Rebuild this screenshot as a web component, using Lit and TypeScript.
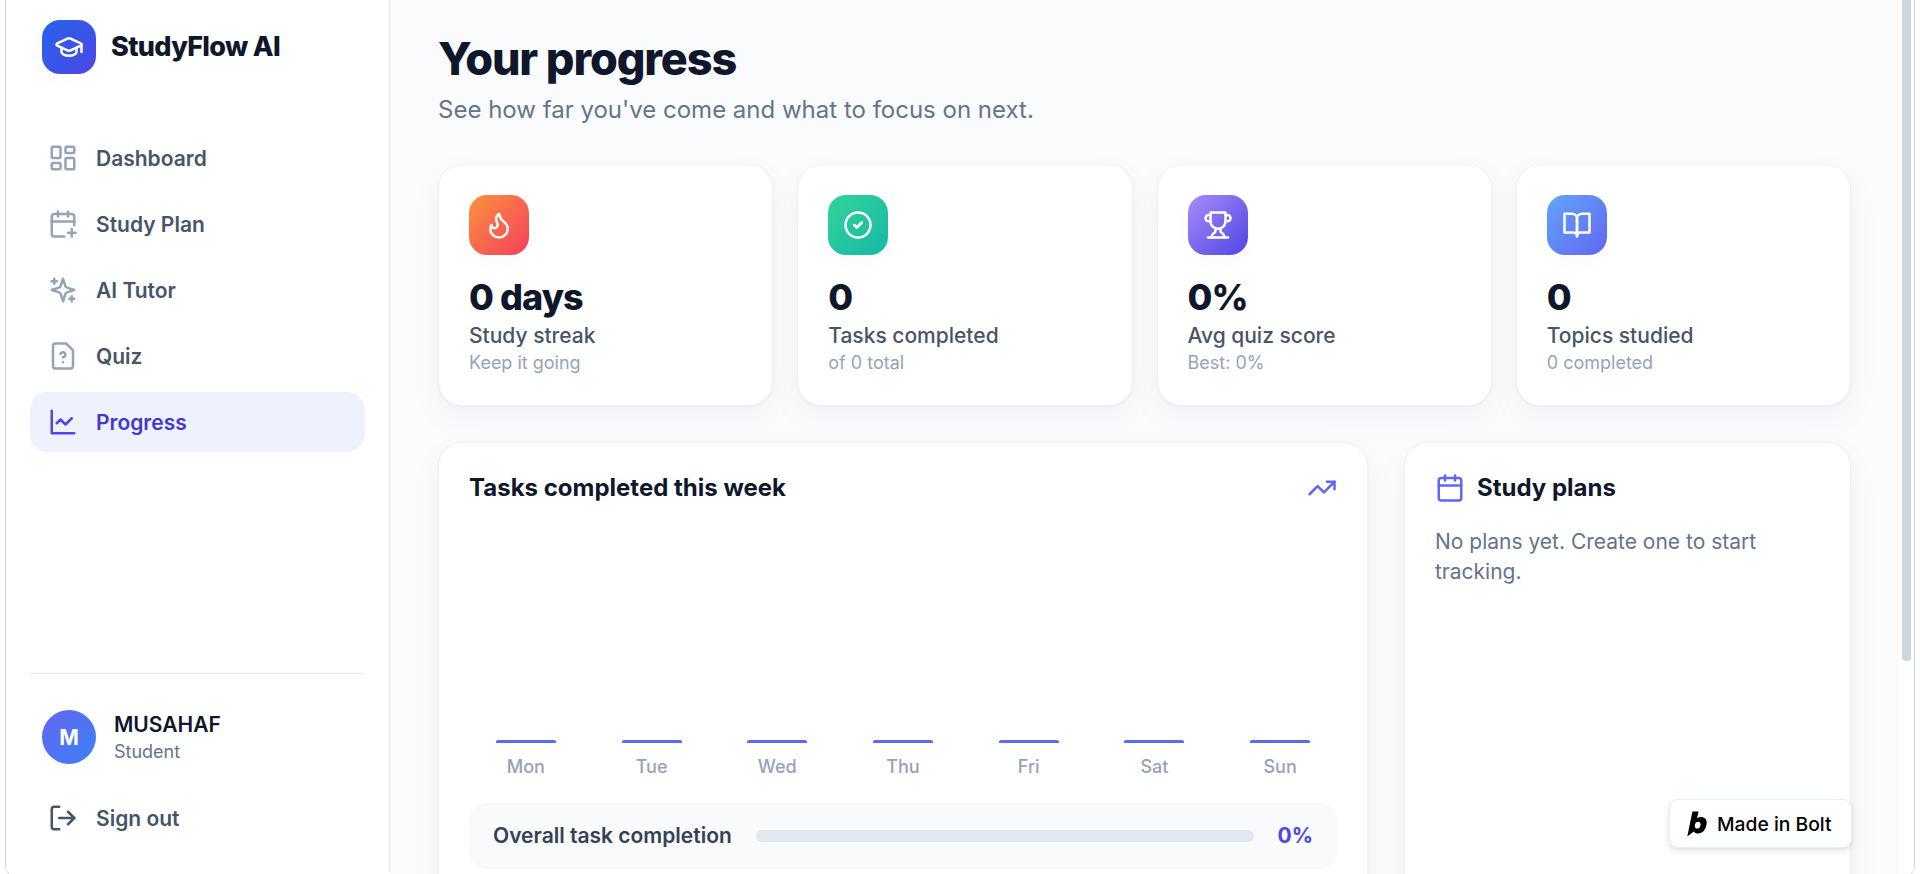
import { LitElement, html, svg, css, type TemplateResult } from 'lit';
import { customElement, property } from 'lit/decorators.js';

type StatTone = 'streak' | 'tasks' | 'score' | 'topics';

interface NavItem {
  label: string;
  icon: string;
  active?: boolean;
}

interface Stat {
  icon: string;
  tone: StatTone;
  value: string;
  label: string;
  hint: string;
}

interface DayCount {
  day: string;
  count: number;
}

const NAV_ITEMS: NavItem[] = [
  { label: 'Dashboard', icon: 'dashboard' },
  { label: 'Study Plan', icon: 'calendar-plus' },
  { label: 'AI Tutor', icon: 'sparkles' },
  { label: 'Quiz', icon: 'file-question' },
  { label: 'Progress', icon: 'line-chart', active: true },
];

const STATS: Stat[] = [
  { icon: 'flame', tone: 'streak', value: '0 days', label: 'Study streak', hint: 'Keep it going' },
  { icon: 'check-circle', tone: 'tasks', value: '0', label: 'Tasks completed', hint: 'of 0 total' },
  { icon: 'trophy', tone: 'score', value: '0%', label: 'Avg quiz score', hint: 'Best: 0%' },
  { icon: 'book', tone: 'topics', value: '0', label: 'Topics studied', hint: '0 completed' },
];

const WEEK: DayCount[] = ['Mon', 'Tue', 'Wed', 'Thu', 'Fri', 'Sat', 'Sun'].map(day => ({ day, count: 0 }));

// Stroke icons on a 24x24 grid
const ICONS: Record<string, TemplateResult> = {
  cap: svg`
    <path d="M21.42 10.922a1 1 0 0 0-.019-1.838L12.83 5.18a2 2 0 0 0-1.66 0L2.6 9.08a1 1 0 0 0 0 1.832l8.57 3.908a2 2 0 0 0 1.66 0z" />
    <path d="M22 10v6" />
    <path d="M6 12.5V16a6 3 0 0 0 12 0v-3.5" />`,
  dashboard: svg`
    <rect width="7" height="9" x="3" y="3" rx="1" />
    <rect width="7" height="5" x="14" y="3" rx="1" />
    <rect width="7" height="9" x="14" y="12" rx="1" />
    <rect width="7" height="5" x="3" y="16" rx="1" />`,
  'calendar-plus': svg`
    <path d="M8 2v4" />
    <path d="M16 2v4" />
    <path d="M21 13V6a2 2 0 0 0-2-2H5a2 2 0 0 0-2 2v14a2 2 0 0 0 2 2h8" />
    <path d="M3 10h18" />
    <path d="M16 19h6" />
    <path d="M19 16v6" />`,
  sparkles: svg`
    <path d="m12 3-1.912 5.813a2 2 0 0 1-1.275 1.275L3 12l5.813 1.912a2 2 0 0 1 1.275 1.275L12 21l1.912-5.813a2 2 0 0 1 1.275-1.275L21 12l-5.813-1.912a2 2 0 0 1-1.275-1.275L12 3Z" />
    <path d="M5 3v4" />
    <path d="M19 17v4" />
    <path d="M3 5h4" />
    <path d="M17 19h4" />`,
  'file-question': svg`
    <path d="M14.5 2H6a2 2 0 0 0-2 2v16a2 2 0 0 0 2 2h12a2 2 0 0 0 2-2V7.5L14.5 2z" />
    <path d="M10 10.3c.2-.4.5-.8.9-1a2.1 2.1 0 0 1 2.6.4c.3.4.5.8.5 1.3 0 1.3-2 2-2 2" />
    <path d="M12 17h.01" />`,
  'line-chart': svg`
    <path d="M3 3v18h18" />
    <path d="m19 9-5 5-4-4-3 3" />`,
  'log-out': svg`
    <path d="M9 21H5a2 2 0 0 1-2-2V5a2 2 0 0 1 2-2h4" />
    <polyline points="16 17 21 12 16 7" />
    <line x1="21" x2="9" y1="12" y2="12" />`,
  flame: svg`
    <path d="M8.5 14.5A2.5 2.5 0 0 0 11 12c0-1.38-.5-2-1-3-1.072-2.143-.224-4.054 2-6 .5 2.5 2 4.9 4 6.5 2 1.6 3 3.5 3 5.5a7 7 0 1 1-14 0c0-1.153.433-2.294 1-3a2.5 2.5 0 0 0 2.5 2.5z" />`,
  'check-circle': svg`
    <circle cx="12" cy="12" r="10" />
    <path d="m9 12 2 2 4-4" />`,
  trophy: svg`
    <path d="M6 9H4.5a2.5 2.5 0 0 1 0-5H6" />
    <path d="M18 9h1.5a2.5 2.5 0 0 0 0-5H18" />
    <path d="M4 22h16" />
    <path d="M10 14.66V17c0 .55-.47.98-.97 1.21C7.85 18.75 7 20.24 7 22" />
    <path d="M14 14.66V17c0 .55.47.98.97 1.21C16.15 18.75 17 20.24 17 22" />
    <path d="M18 2H6v7a6 6 0 0 0 12 0V2Z" />`,
  book: svg`
    <path d="M2 3h6a4 4 0 0 1 4 4v14a3 3 0 0 0-3-3H2z" />
    <path d="M22 3h-6a4 4 0 0 0-4 4v14a3 3 0 0 1 3-3h7z" />`,
  trending: svg`
    <polyline points="22 7 13.5 15.5 8.5 10.5 2 17" />
    <polyline points="16 7 22 7 22 13" />`,
  calendar: svg`
    <path d="M8 2v4" />
    <path d="M16 2v4" />
    <rect width="18" height="18" x="3" y="4" rx="2" />
    <path d="M3 10h18" />`,
};

@customElement('app-icon')
export class AppIcon extends LitElement {
  @property() name = '';

  static styles = css`
    :host {
      display: block;
      flex: none;
      width: 30px;
      height: 30px;
    }

    .icon {
      display: block;
      width: 100%;
      height: 100%;
      fill: none;
      stroke: currentColor;
      stroke-width: 2;
      stroke-linecap: round;
      stroke-linejoin: round;
    }
  `;

  render(): TemplateResult {
    return html`<svg class="icon" viewBox="0 0 24 24">${ICONS[this.name]}</svg>`;
  }
}

@customElement('app-sidebar')
export class AppSidebar extends LitElement {
  static styles = css`
    :host {
      display: flex;
      flex-direction: column;
      box-sizing: border-box;
      flex: none;
      width: 384px;
      height: 872px;
      padding: 20px 24px 24px;
      border-right: 1px solid #e5e9f0;
      background: #fff;
    }

    .brand {
      display: flex;
      align-items: center;
      gap: 15px;
      padding: 0 12px;
      font-size: 27px;
      line-height: 54px;
      font-weight: 800;
      letter-spacing: -0.025em;
      color: #0f172a;
    }

    .brand span {
      margin-top: -1px;
    }

    .logo {
      display: grid;
      place-items: center;
      width: 54px;
      height: 54px;
      border-radius: 18px;
      color: #fff;
      background: linear-gradient(135deg, #2563eb, #4f46e5);
      box-shadow: 0 6px 24px rgba(15, 23, 42, 0.02);
    }

    nav {
      display: flex;
      flex-direction: column;
      gap: 6px;
      margin-top: 54px;
    }

    .item {
      display: flex;
      align-items: center;
      gap: 18px;
      height: 60px;
      padding: 0 18px;
      border-radius: 18px;
      font-size: 21px;
      font-weight: 600;
      color: #475569;
    }

    .item app-icon {
      color: #94a3b8;
    }

    .item.active {
      background: #eef2ff;
      color: #4338ca;
    }

    .item.active app-icon {
      color: #4f46e5;
    }

    .item.sign-out app-icon {
      color: #475569;
    }

    .footer {
      margin-top: auto;
      padding-top: 24px;
      border-top: 1px solid #e5e9f0;
    }

    .user {
      display: flex;
      align-items: center;
      gap: 18px;
      padding: 12px;
      margin-bottom: 12px;
    }

    .avatar {
      display: grid;
      place-items: center;
      width: 54px;
      height: 54px;
      border-radius: 50%;
      font-size: 21px;
      font-weight: 700;
      color: #fff;
      background: linear-gradient(135deg, #6366f1, #3b82f6);
    }

    .name {
      font-size: 21px;
      line-height: 30px;
      font-weight: 600;
      color: #0f172a;
    }

    .role {
      font-size: 18px;
      line-height: 24px;
      color: #64748b;
    }
  `;

  render(): TemplateResult {
    return html`
      <div class="brand">
        <div class="logo"><app-icon name="cap"></app-icon></div>
        <span>StudyFlow AI</span>
      </div>
      <nav>
        ${NAV_ITEMS.map(
          item => html`
            <div class="item ${item.active ? 'active' : ''}">
              <app-icon name=${item.icon}></app-icon>
              <span>${item.label}</span>
            </div>
          `
        )}
      </nav>
      <div class="footer">
        <div class="user">
          <div class="avatar">M</div>
          <div>
            <div class="name">MUSAHAF</div>
            <div class="role">Student</div>
          </div>
        </div>
        <div class="item sign-out">
          <app-icon name="log-out"></app-icon>
          <span>Sign out</span>
        </div>
      </div>
    `;
  }
}

@customElement('week-chart')
export class WeekChart extends LitElement {
  @property({ type: Array }) days: DayCount[] = [];

  static styles = css`
    .chart {
      display: grid;
      grid-template-columns: repeat(7, 1fr);
      gap: 12px;
      height: 240px;
    }

    .day {
      display: flex;
      flex-direction: column;
      align-items: center;
      justify-content: flex-end;
      gap: 12px;
    }

    .bar {
      width: 60px;
      min-height: 3px;
      border-radius: 2px 2px 0 0;
      background: linear-gradient(to top, #4f74f0, #6366f1);
    }

    .label {
      font-size: 18px;
      line-height: 24px;
      font-weight: 500;
      color: #94a3b8;
    }
  `;

  render(): TemplateResult {
    const max = Math.max(...this.days.map(d => d.count), 1);
    return html`
      <div class="chart">
        ${this.days.map(
          d => html`
            <div class="day">
              <div class="bar" style="height: ${(d.count / max) * 200}px"></div>
              <div class="label">${d.day}</div>
            </div>
          `
        )}
      </div>
    `;
  }
}

@customElement('app-root')
export class AppRoot extends LitElement {
  static styles = css`
    :host {
      display: block;
      position: relative;
      height: 874px;
      overflow: hidden;
      background: #fff;
      font-family: Inter, 'Liberation Sans', sans-serif;
    }

    /* Preview frame, its bottom edge runs just below the fold */
    .frame {
      display: flex;
      box-sizing: border-box;
      width: 1910px;
      height: 890px;
      margin: -12px 0 0 5px;
      padding-top: 11px;
      border: 1px solid #d4d4d8;
      border-radius: 12px;
      overflow: hidden;
    }

    main {
      box-sizing: border-box;
      flex: 1;
      min-width: 0;
      height: 880px;
      padding: 32px 48px 0;
      overflow: hidden;
      background: #fafbfd;
    }

    .scrollbar {
      flex: none;
      width: 15px;
      background: #fff;
    }

    .thumb {
      width: 9px;
      height: 661px;
      margin-left: 3px;
      border-radius: 0 0 4px 4px;
      background: #cbd5e1;
    }

    h1 {
      margin: 0;
      font-size: 45px;
      line-height: 54px;
      font-weight: 800;
      letter-spacing: -0.025em;
      color: #0f172a;
    }

    .subtitle {
      margin: 6px 0 36px;
      font-size: 24px;
      line-height: 36px;
      color: #64748b;
    }

    .stats {
      display: grid;
      grid-template-columns: repeat(4, 1fr);
      gap: 24px;
    }

    .card {
      box-sizing: border-box;
      padding: 30px;
      border: 1px solid #eff1f5;
      border-radius: 24px;
      background: #fff;
      box-shadow: 0 1px 3px rgba(15, 23, 42, 0.04), 0 12px 36px rgba(15, 23, 42, 0.04);
    }

    .badge {
      display: grid;
      place-items: center;
      width: 60px;
      height: 60px;
      border-radius: 18px;
      color: #fff;
      box-shadow: 0 6px 24px rgba(15, 23, 42, 0.02);
    }

    .badge.streak {
      background: linear-gradient(135deg, #fb923c, #f43f5e);
    }

    .badge.tasks {
      background: linear-gradient(135deg, #34d399, #14b8a6);
    }

    .badge.score {
      background: linear-gradient(135deg, #a78bfa, #4f46e5);
    }

    .badge.topics {
      background: linear-gradient(135deg, #60a5fa, #6366f1);
    }

    .value {
      margin-top: 18px;
      font-size: 36px;
      line-height: 48px;
      font-weight: 800;
      letter-spacing: -0.025em;
      color: #0f172a;
    }

    .label {
      font-size: 21px;
      line-height: 30px;
      font-weight: 500;
      color: #475569;
    }

    .hint {
      font-size: 18px;
      line-height: 24px;
      color: #94a3b8;
    }

    .panels {
      display: grid;
      grid-template-columns: repeat(3, 1fr);
      gap: 36px;
      margin-top: 36px;
    }

    .panel {
      height: 520px;
    }

    .week {
      grid-column: span 2;
    }

    .head {
      display: flex;
      align-items: center;
      gap: 12px;
      height: 30px;
    }

    .head app-icon {
      color: #6366f1;
    }

    .week .head {
      justify-content: space-between;
    }

    h2 {
      margin: 0;
      font-size: 24px;
      line-height: 30px;
      font-weight: 700;
      color: #0f172a;
    }

    week-chart {
      display: block;
      margin: 36px 0 24px;
    }

    .overall {
      display: flex;
      align-items: center;
      gap: 24px;
      padding: 18px 24px;
      border-radius: 18px;
      background: #f9fafc;
      font-size: 21px;
      line-height: 30px;
      font-weight: 600;
      color: #334155;
    }

    .track {
      flex: 1;
      height: 12px;
      border-radius: 6px;
      background: #e2e8f0;
    }

    .percent {
      font-weight: 700;
      color: #4f46e5;
    }

    .empty {
      margin: 24px 0 0;
      font-size: 21px;
      line-height: 30px;
      color: #64748b;
    }

    .bolt {
      position: absolute;
      right: 68px;
      bottom: 26px;
      display: flex;
      align-items: center;
      gap: 9px;
      box-sizing: border-box;
      width: 183px;
      height: 49px;
      padding-left: 17px;
      border: 1px solid #e5effb;
      border-radius: 9px;
      background: #fff;
      box-shadow: 0 3px 6px rgba(0, 0, 0, 0.12);
      font-size: 19.3px;
      font-weight: 500;
      white-space: nowrap;
      color: #000;
    }

    .bolt-mark {
      flex: none;
      width: 21px;
      height: 26px;
    }
  `;

  private renderStat(stat: Stat): TemplateResult {
    return html`
      <div class="card">
        <div class="badge ${stat.tone}"><app-icon name=${stat.icon}></app-icon></div>
        <div class="value">${stat.value}</div>
        <div class="label">${stat.label}</div>
        <div class="hint">${stat.hint}</div>
      </div>
    `;
  }

  render(): TemplateResult {
    return html`
      <div class="frame">
        <app-sidebar></app-sidebar>
        <main>
          <h1>Your progress</h1>
          <p class="subtitle">See how far you've come and what to focus on next.</p>
          <div class="stats">${STATS.map(stat => this.renderStat(stat))}</div>
          <div class="panels">
            <section class="card panel week">
              <div class="head">
                <h2>Tasks completed this week</h2>
                <app-icon name="trending"></app-icon>
              </div>
              <week-chart .days=${WEEK}></week-chart>
              <div class="overall">
                <span>Overall task completion</span>
                <div class="track"></div>
                <span class="percent">0%</span>
              </div>
            </section>
            <section class="card panel">
              <div class="head">
                <app-icon name="calendar"></app-icon>
                <h2>Study plans</h2>
              </div>
              <p class="empty">No plans yet. Create one to start tracking.</p>
            </section>
          </div>
        </main>
        <div class="scrollbar"><div class="thumb"></div></div>
      </div>
      <div class="bolt">
        <svg class="bolt-mark" viewBox="0 0 21 26">
          <path
            fill="#000"
            fill-rule="evenodd"
            d="M5.4 0.6h6.2L10 7.4c1-1 2.300-1.500 4-1.500 4.200 0 6.200 3 5.600 7.200-.8 5.800-4.200 9.400-8.400 9.400-2 0-3.500-.7-4.400-2.100L0.300 25.400zM11.200 10.700c-2 0-3.200 1.600-3.400 3.800-.2 1.900.7 3.100 2.300 3.100 2 0 3.200-1.500 3.500-3.700.2-1.900-.7-3.200-2.400-3.200z"
          />
        </svg>
        <span>Made in Bolt</span>
      </div>
    `;
  }
}
